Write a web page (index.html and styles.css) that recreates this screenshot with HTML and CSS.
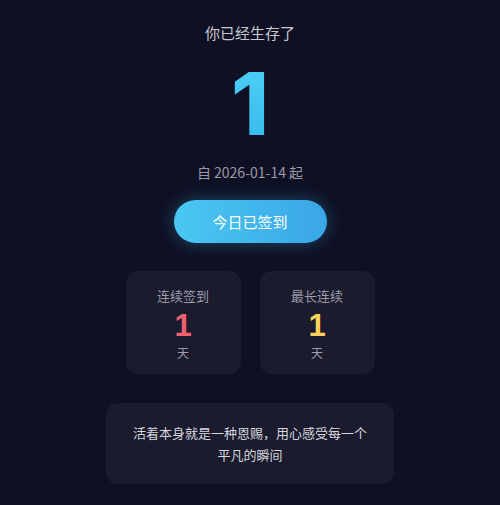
FILE: index.html
```html
<!DOCTYPE html>
<html lang="zh">
<head>
<meta charset="utf-8">
<link rel="stylesheet" href="styles.css">
</head>
<body>
<main class="page">
  <div class="title">你已经生存了</div>
  <div class="days">1</div>
  <div class="since">自 2026-01-14 起</div>
  <button class="checkin">今日已签到</button>
  <section class="stats">
    <div class="card">
      <div class="label">连续签到</div>
      <div class="num red">1</div>
      <div class="unit">天</div>
    </div>
    <div class="card">
      <div class="label">最长连续</div>
      <div class="num yellow">1</div>
      <div class="unit">天</div>
    </div>
  </section>
  <section class="quote">活着本身就是一种恩赐，用心感受每一个平凡的瞬间</section>
</main>
</body>
</html>
```
FILE: styles.css
```css
html, body {
  margin: 0;
  padding: 0;
  background: #0f1023;
  height: 100%;
}
body {
  font-family: "Noto Sans CJK SC", "Liberation Sans", sans-serif;
  color: #d0d0da;
}
.page {
  display: flex;
  flex-direction: column;
  align-items: center;
  padding-top: 22px;
}
.title {
  font-size: 15px;
  line-height: 22px;
  color: #c9c9d3;
}
.days {
  margin-top: 16px;
  font-family: "Inter", "Liberation Sans", sans-serif;
  font-weight: 800;
  font-size: 86px;
  line-height: 88px;
  background: linear-gradient(180deg, #4dd0f5, #38b9ee);
  -webkit-background-clip: text;
  background-clip: text;
  color: transparent;
}
.since {
  margin-top: 14px;
  font-size: 14px;
  line-height: 20px;
  color: #9a9aa8;
}
.checkin {
  margin-top: 18px;
  width: 153px;
  height: 43px;
  border: none;
  border-radius: 22px;
  background: linear-gradient(90deg, #4ac8f2, #3aa6e6);
  color: #fff;
  font-family: "Noto Sans CJK SC", sans-serif;
  font-size: 15px;
  box-shadow: 0 0 18px rgba(60, 180, 240, 0.35);
}
.stats {
  margin-top: 28px;
  display: flex;
  gap: 19px;
}
.card {
  width: 115px;
  height: 103px;
  box-sizing: border-box;
  background: #1a1b2d;
  border-radius: 12px;
  display: flex;
  flex-direction: column;
  align-items: center;
  padding-top: 15px;
}
.label {
  font-size: 13px;
  line-height: 19px;
  color: #9c9cab;
}
.num {
  font-family: "Liberation Sans", "Inter", sans-serif;
  font-weight: 700;
  font-size: 31px;
  line-height: 26px;
  margin-top: 8px;
}
.red { color: #f0606e; }
.yellow { color: #fbd15b; }
.unit {
  font-size: 12px;
  line-height: 18px;
  color: #9c9cab;
  margin-top: 5px;
}
.quote {
  margin-top: 29px;
  width: 288px;
  height: 81px;
  box-sizing: border-box;
  background: #1a1b2d;
  border-radius: 12px;
  padding: 0 24px;
  display: flex;
  align-items: center;
  justify-content: center;
  text-align: center;
  font-size: 13px;
  line-height: 22px;
  color: #d6d6de;
}
```
